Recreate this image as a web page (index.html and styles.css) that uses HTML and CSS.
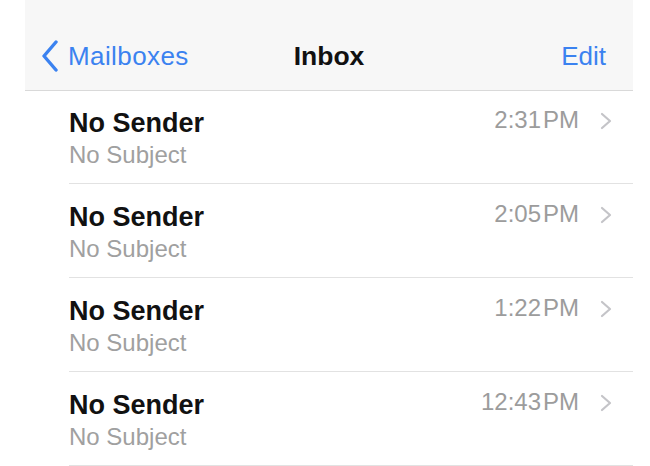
FILE: index.html
```html
<!DOCTYPE html>
<html>
<head>
	<meta http-equiv="Content-Type" content="text/html;charset=utf-8"/>
	<title>Inbox</title>
	<link rel="stylesheet" href="styles.css">
</head>
<body>
	<div class="screen">
		<div class="navbar">
			<a href="javascript:;" class="back">
				<svg class="back-icon" width="20" height="32" viewBox="0 0 20 32">
					<path d="M16 2 L4 16 L16 30" fill="none" stroke="#3b82f0" stroke-width="3.4" stroke-linecap="round" stroke-linejoin="round"/>
				</svg>
				<span>Mailboxes</span>
			</a>
			<div class="title">Inbox</div>
			<a href="javascript:;" class="edit">Edit</a>
		</div>
		<ul class="list">
			<li class="row">
				<div class="main">
					<div class="sender">No Sender</div>
					<div class="subject">No Subject</div>
				</div>
				<div class="meta">
					<span class="time">2:31&#8202;PM</span>
					<svg class="chev" width="12" height="18" viewBox="0 0 12 18"><path d="M2 2 L10 9 L2 16" fill="none" stroke="#c4c4c8" stroke-width="2.2" stroke-linecap="round" stroke-linejoin="round"/></svg>
				</div>
			</li>
			<li class="row">
				<div class="main">
					<div class="sender">No Sender</div>
					<div class="subject">No Subject</div>
				</div>
				<div class="meta">
					<span class="time">2:05&#8202;PM</span>
					<svg class="chev" width="12" height="18" viewBox="0 0 12 18"><path d="M2 2 L10 9 L2 16" fill="none" stroke="#c4c4c8" stroke-width="2.2" stroke-linecap="round" stroke-linejoin="round"/></svg>
				</div>
			</li>
			<li class="row">
				<div class="main">
					<div class="sender">No Sender</div>
					<div class="subject">No Subject</div>
				</div>
				<div class="meta">
					<span class="time">1:22&#8202;PM</span>
					<svg class="chev" width="12" height="18" viewBox="0 0 12 18"><path d="M2 2 L10 9 L2 16" fill="none" stroke="#c4c4c8" stroke-width="2.2" stroke-linecap="round" stroke-linejoin="round"/></svg>
				</div>
			</li>
			<li class="row">
				<div class="main">
					<div class="sender">No Sender</div>
					<div class="subject">No Subject</div>
				</div>
				<div class="meta">
					<span class="time">12:43&#8202;PM</span>
					<svg class="chev" width="12" height="18" viewBox="0 0 12 18"><path d="M2 2 L10 9 L2 16" fill="none" stroke="#c4c4c8" stroke-width="2.2" stroke-linecap="round" stroke-linejoin="round"/></svg>
				</div>
			</li>
		</ul>
	</div>
</body>
</html>
```

FILE: styles.css
```css
*{
	margin: 0;
	padding: 0;
	text-decoration: none;
	list-style: none;
}
body{
	background: #fff;
	font-family: "Liberation Sans", Arial, sans-serif;
}
.screen{
	width: 608px;
	margin-left: 25px;
	background: #fff;
}
.navbar{
	height: 90px;
	border-bottom: 1px solid #d9d9d9;
	background: #f7f7f7;
	display: grid;
	grid-template-columns: 1fr auto 1fr;
	align-items: start;
	padding: 0 15px;
	font-size: 26px;
	line-height: 30px;
}
.back{
	display: flex;
	align-items: flex-start;
	color: #3b82f0;
	padding-top: 41px;
	letter-spacing: 0.4px;
}
.back-icon{
	margin: -1px 8px 0 0;
}
.title{
	font-weight: bold;
	font-size: 26.5px;
	color: #111;
	padding-top: 41px;
}
.edit{
	color: #3b82f0;
	text-align: right;
	padding: 41px 12px 0 0;
}
.list{
	padding-left: 44px;
}
.row{
	height: 75px;
	padding: 18px 21px 0 0;
	border-bottom: 1px solid #e2e2e2;
	display: flex;
	align-items: flex-start;
}
.row:first-child{
	padding-top: 17px;
}
.main{
	flex: 1;
}
.sender{
	font-size: 27px;
	line-height: 30px;
	font-weight: bold;
	color: #111;
}
.subject{
	margin-top: 3px;
	font-size: 24px;
	line-height: 28px;
	color: #a0a0a0;
}
.meta{
	display: flex;
	align-items: center;
}
.time{
	font-size: 24px;
	line-height: 24px;
	color: #9c9c9c;
}
.chev{
	margin: 2px 0 0 21px;
}
```
